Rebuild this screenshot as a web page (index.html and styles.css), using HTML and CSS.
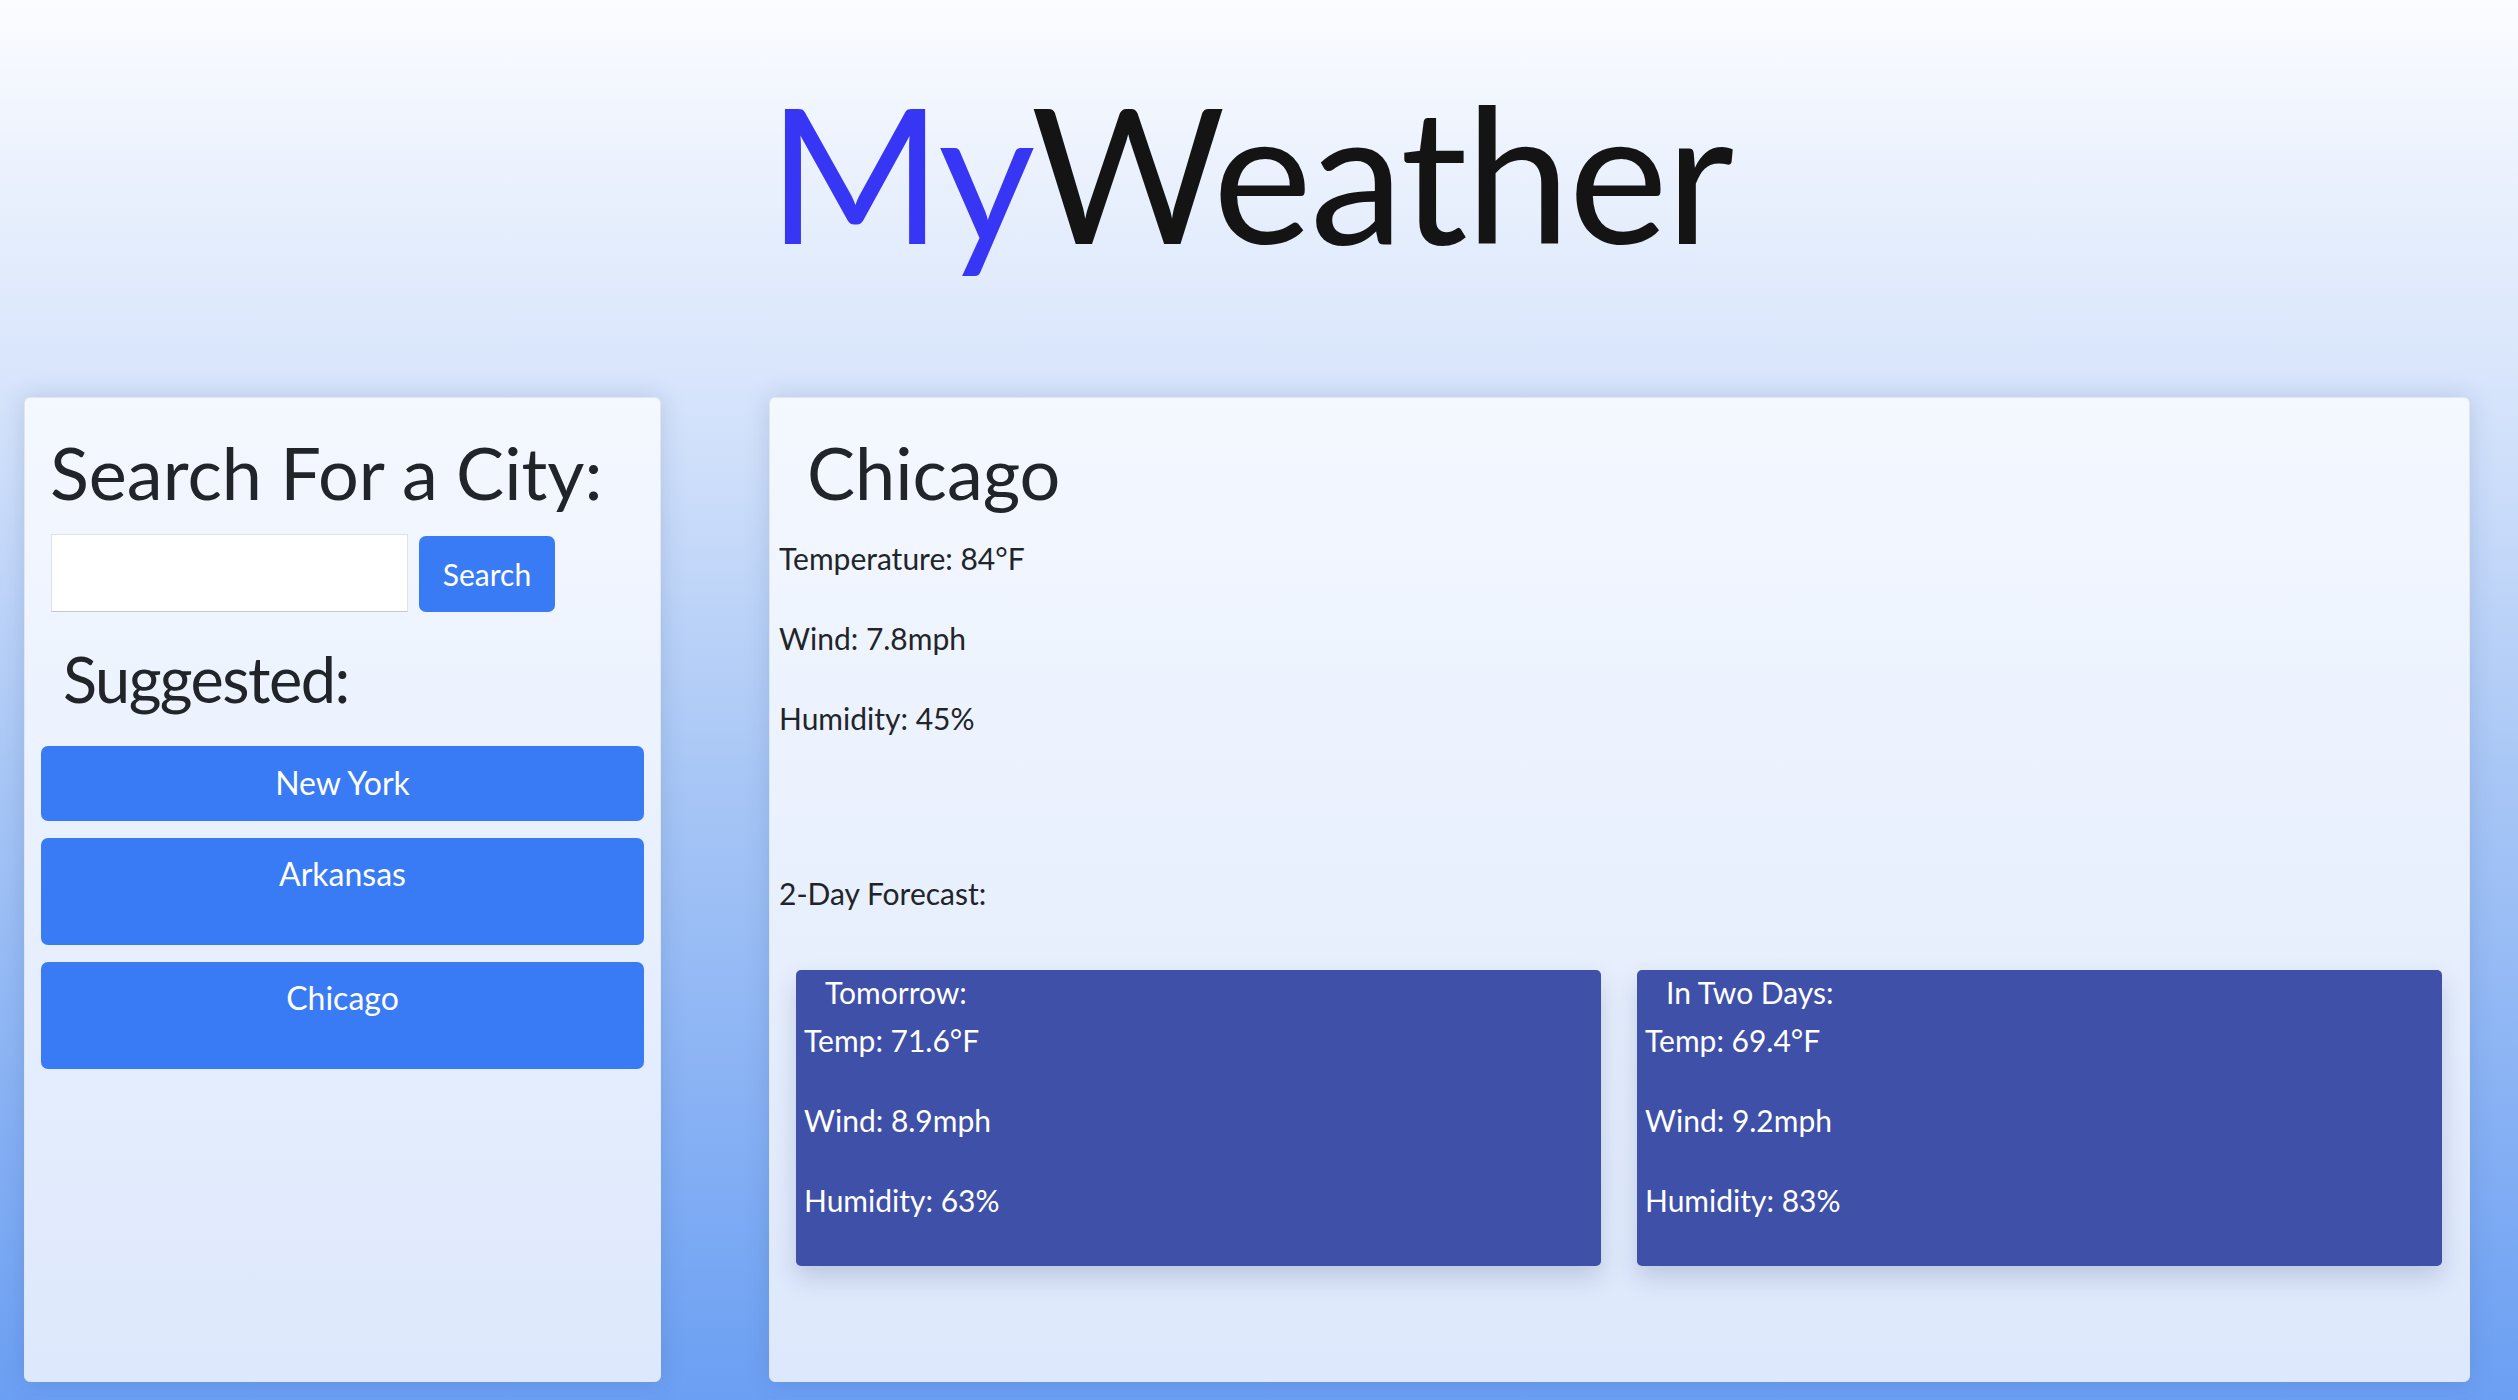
FILE: index.html
```html
<!DOCTYPE html>
<html lang="en">
<head>
<meta charset="utf-8">
<title>MyWeather</title>
<link rel="stylesheet" href="styles.css">
</head>
<body>
<header class="header">
  <h1 class="logo"><span class="logo-my">My</span><span class="logo-weather">Weather</span></h1>
</header>
<main class="main">
  <section class="panel side">
    <h2 class="side-title">Search For a City:</h2>
    <form class="search-row">
      <input class="search-input" type="text" aria-label="City">
      <button class="search-btn" type="button">Search</button>
    </form>
    <h3 class="suggest-title">Suggested:</h3>
    <div class="suggest-list">
      <button class="city-btn" type="button">New York</button>
      <button class="city-btn tall" type="button">Arkansas</button>
      <button class="city-btn tall" type="button">Chicago</button>
    </div>
  </section>
  <section class="panel current">
    <h2 class="city-title">Chicago</h2>
    <p class="stat">Temperature: 84°F</p>
    <p class="stat">Wind: 7.8mph</p>
    <p class="stat">Humidity: 45%</p>
    <p class="stat forecast-label">2-Day Forecast:</p>
    <div class="forecast">
      <div class="fcard">
        <p class="fcard-title">Tomorrow:</p>
        <p class="fstat first">Temp: 71.6°F</p>
        <p class="fstat">Wind: 8.9mph</p>
        <p class="fstat">Humidity: 63%</p>
      </div>
      <div class="fcard">
        <p class="fcard-title">In Two Days:</p>
        <p class="fstat first">Temp: 69.4°F</p>
        <p class="fstat">Wind: 9.2mph</p>
        <p class="fstat">Humidity: 83%</p>
      </div>
    </div>
  </section>
</main>
</body>
</html>
```

FILE: styles.css
```css
* { box-sizing: border-box; }

html, body { margin: 0; padding: 0; }

body {
  min-height: 1400px;
  display: flex;
  flex-direction: column;
  font-family: "Lato", "Open Sans", sans-serif;
  color: #212529;
  background: linear-gradient(to bottom, #fbfcff 0%, #d5e3fb 29%, #a9c7f6 55%, #6b9ff3 100%);
}

.header {
  padding-top: 76px;
  padding-bottom: 131px;
  padding-right: 18px;
}

.logo {
  margin: 0;
  text-align: center;
  font-weight: 400;
  font-size: 188px;
  line-height: 190px;
  height: 190px;
  letter-spacing: -2px;
}

.logo-my { color: #3636f4; }
.logo-weather { color: #141414; }

.main {
  flex: 1;
  display: grid;
  grid-template-columns: 637px 1701px;
  column-gap: 108px;
  padding: 0 48px 18px 24px;
}

.panel {
  background: linear-gradient(to bottom, #f4f8ff 0%, #dde8fc 100%);
  border: 1px solid #e1e6ee;
  border-radius: 6px;
  box-shadow: 0 0 24px rgba(40, 70, 130, 0.18);
}

.side-title,
.city-title {
  margin: 38px 0 0;
  font-size: 72px;
  line-height: 72px;
  font-weight: 400;
}

.side-title { padding-left: 25px; }
.city-title { padding-left: 37px; }

.search-row {
  display: flex;
  align-items: flex-end;
  gap: 11px;
  margin: 26px 0 0;
  padding-left: 26px;
}

.search-input {
  width: 357px;
  height: 78px;
  background: #fff;
  border: 1px solid #dfe3e9;
  border-bottom-color: #c3c8cf;
  border-radius: 0;
  font-size: 28px;
  font-family: inherit;
  padding: 0 12px;
}

.search-btn {
  width: 136px;
  height: 76px;
  background: #397bf5;
  color: #fff;
  border: 0;
  border-radius: 7px;
  font-family: inherit;
  font-size: 30px;
  padding: 0;
}

.suggest-title {
  margin: 35px 0 0;
  padding-left: 38px;
  font-size: 63px;
  line-height: 64px;
  font-weight: 400;
  letter-spacing: -1.5px;
}

.suggest-list {
  display: flex;
  flex-direction: column;
  gap: 17px;
  margin-top: 35px;
  padding: 0 16px;
}

.city-btn {
  display: block;
  width: 100%;
  background: #397bf5;
  color: #fff;
  border: 0;
  border-radius: 7px;
  font-family: inherit;
  font-size: 32px;
  line-height: 32px;
  padding: 21px 0 22px;
  text-align: center;
}

.city-btn.tall {
  padding: 20px 0 55px;
}

.stat {
  margin: 0 0 40px;
  padding-left: 9px;
  font-size: 30px;
  line-height: 40px;
}

.city-title + .stat { margin-top: 30px; }

.forecast-label {
  margin-top: 135px;
  margin-bottom: 0;
}

.forecast {
  display: grid;
  grid-template-columns: 1fr 1fr;
  column-gap: 36px;
  margin-top: 57px;
  padding: 0 27px 0 26px;
}

.fcard {
  height: 296px;
  background: #3f50a8;
  color: #fff;
  border-radius: 5px;
  box-shadow: 0 12px 24px rgba(30, 50, 100, 0.18);
  padding: 2px 0 0 8px;
}

.fcard p { margin: 0; }

.fcard-title {
  padding-left: 21px;
  font-size: 30px;
  line-height: 40px;
}

.fstat {
  font-size: 30px;
  line-height: 40px;
  margin-top: 40px !important;
}

.fstat.first { margin-top: 8px !important; }
```
